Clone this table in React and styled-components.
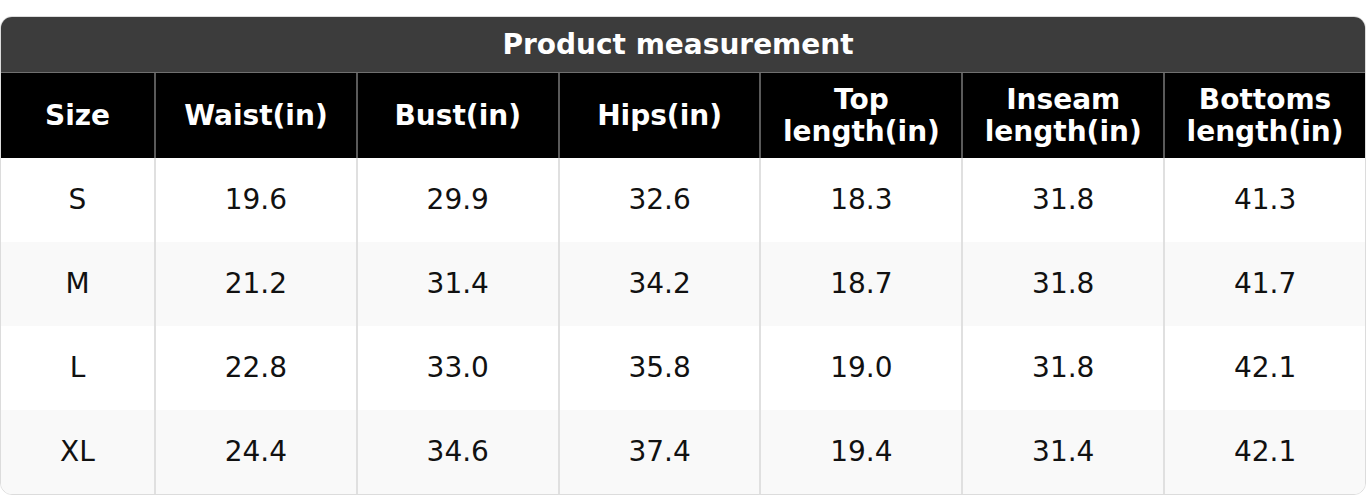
import React from "react";
import styled, { createGlobalStyle } from "styled-components";

const Global = createGlobalStyle`
  html, body { margin: 0; padding: 0; background: #ffffff; }
  body { font-family: "DejaVu Sans", "Liberation Sans", sans-serif; }
`;

const Page = styled.div`
  padding-top: 16px;
`;

const Table = styled.div`
  border: 1px solid #dcdcdc;
  border-radius: 12px;
  overflow: hidden;
  background: #ffffff;
`;

const Title = styled.div`
  height: 55px;
  padding-right: 10px;
  background: #3c3c3c;
  color: #ffffff;
  font-weight: 700;
  font-size: 28px;
  display: flex;
  align-items: center;
  justify-content: center;
  border-bottom: 1px solid #707070;
`;

const Row = styled.div`
  display: grid;
  grid-template-columns: 153px repeat(6, 1fr);
  height: ${(p) => (p.$head ? 85 : 84)}px;
  background: ${(p) => (p.$head ? "#000000" : p.$alt ? "#f9f9f9" : "#ffffff")};
`;

const Cell = styled.div`
  display: flex;
  align-items: center;
  justify-content: center;
  text-align: center;
  font-size: 28px;
  line-height: 32px;
  font-weight: ${(p) => (p.$head ? 700 : 400)};
  color: ${(p) => (p.$head ? "#ffffff" : "#111111")};
  border-left: 2px solid ${(p) => (p.$head ? "#5a5a5a" : "#e0e0e0")};
  &:first-child { border-left: none; }
`;

const headers = [
  ["Size"],
  ["Waist(in)"],
  ["Bust(in)"],
  ["Hips(in)"],
  ["Top", "length(in)"],
  ["Inseam", "length(in)"],
  ["Bottoms", "length(in)"],
];

const rows = [
  ["S", "19.6", "29.9", "32.6", "18.3", "31.8", "41.3"],
  ["M", "21.2", "31.4", "34.2", "18.7", "31.8", "41.7"],
  ["L", "22.8", "33.0", "35.8", "19.0", "31.8", "42.1"],
  ["XL", "24.4", "34.6", "37.4", "19.4", "31.4", "42.1"],
];

export default function App() {
  return (
    <>
      <Global />
      <Page>
        <Table>
          <Title>Product measurement</Title>
          <Row $head>
            {headers.map((h, i) => (
              <Cell $head key={i}>
                <span>
                  {h.map((line, j) => (
                    <React.Fragment key={j}>
                      {j > 0 && <br />}
                      {line}
                    </React.Fragment>
                  ))}
                </span>
              </Cell>
            ))}
          </Row>
          {rows.map((r, i) => (
            <Row key={i} $alt={i % 2 === 1}>
              {r.map((v, j) => (
                <Cell key={j}>{v}</Cell>
              ))}
            </Row>
          ))}
        </Table>
      </Page>
    </>
  );
}
